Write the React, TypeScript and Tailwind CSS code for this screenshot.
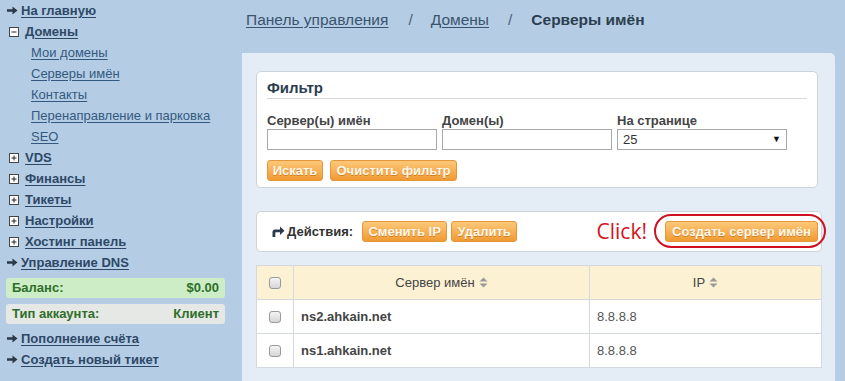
import type { ReactNode } from 'react';

const FONT = { fontFamily: '"Liberation Sans", Arial, sans-serif' };

function Arrow() {
  return (
    <svg width="11" height="9" viewBox="0 0 11 9" className="shrink-0">
      <path d="M0 3.2 H5.5 V0.5 L10.5 4.5 L5.5 8.5 V5.8 H0 Z" fill="#2b3a4a" />
    </svg>
  );
}

function ToggleBox({ open }: { open: boolean }) {
  return (
    <svg width="10" height="10" viewBox="0 0 10 10" className="shrink-0">
      <rect x="0.5" y="0.5" width="9" height="9" fill="#fff" stroke="#444" />
      <path d="M2.5 5 H7.5" stroke="#222" />
      {!open && <path d="M5 2.5 V7.5" stroke="#222" />}
    </svg>
  );
}

function SortIcon() {
  return (
    <svg width="9" height="11" viewBox="0 0 9 11" className="inline-block ml-[4px] -mt-[2px] align-middle">
      <path d="M0.5 4.5 L4.5 0.5 L8.5 4.5 Z" fill="#9a9a9a" />
      <path d="M0.5 6.5 L4.5 10.5 L8.5 6.5 Z" fill="#9a9a9a" />
    </svg>
  );
}

function Check() {
  return (
    <div className="w-[12px] h-[12px] rounded-[3px] border border-[#9a9a9a] bg-gradient-to-b from-[#f4f4f4] to-[#d6d6d6]" />
  );
}

function OrangeButton({ children, w }: { children: ReactNode; w: string }) {
  return (
    <button
      className={`${w} h-[21px] rounded-[3px] border border-[#e3973a] bg-gradient-to-b from-[#fcc877] to-[#f09a30] text-[13px] font-bold text-[#fff8e8] leading-[19px] [text-shadow:0_1px_0_rgba(180,100,20,0.6)] flex items-center justify-center`}
    >
      {children}
    </button>
  );
}

function NavTop({ label, icon }: { label: string; icon: ReactNode }) {
  return (
    <div className="h-[21px] flex items-center">
      {icon}
      <a className="text-[13px] font-bold text-[#2d4867] underline underline-offset-2">{label}</a>
    </div>
  );
}

function NavSub({ label }: { label: string }) {
  return (
    <div className="h-[21px] flex items-center pl-[24px]">
      <a className="text-[13px] text-[#34597f] underline underline-offset-2">{label}</a>
    </div>
  );
}

export default function App() {
  return (
    <div className="w-[845px] h-[381px] overflow-hidden bg-[#b5cde4] flex" style={FONT}>
      {/* sidebar */}
      <div className="w-[242px] shrink-0 pl-[7px] pr-[17px]">
        <NavTop label="На главную" icon={<span className="mr-[3px] flex"><Arrow /></span>} />
        <NavTop label="Домены" icon={<span className="ml-[2px] mr-[6px] flex"><ToggleBox open /></span>} />
        <NavSub label="Мои домены" />
        <NavSub label="Серверы имён" />
        <NavSub label="Контакты" />
        <NavSub label="Перенаправление и парковка" />
        <NavSub label="SEO" />
        {['VDS', 'Финансы', 'Тикеты', 'Настройки', 'Хостинг панель'].map((l) => (
          <NavTop key={l} label={l} icon={<span className="ml-[2px] mr-[6px] flex"><ToggleBox open={false} /></span>} />
        ))}
        <NavTop label="Управление DNS" icon={<span className="mr-[3px] flex"><Arrow /></span>} />
        <div className="mt-[5px] -ml-[1px] h-[20px] rounded-[3px] bg-[#cdedc6] flex items-center justify-between px-[6px] text-[13px] font-bold text-[#2f6e2a]">
          <span>Баланс:</span>
          <span>$0.00</span>
        </div>
        <div className="mt-[6px] -ml-[1px] h-[20px] rounded-[3px] bg-[#e6e8e6] flex items-center justify-between px-[6px] text-[13px] font-bold text-[#2f6e2a]">
          <span>Тип аккаунта:</span>
          <span>Клиент</span>
        </div>
        <div className="mt-[4px]">
          <NavTop label="Пополнение счёта" icon={<span className="mr-[3px] flex"><Arrow /></span>} />
          <NavTop label="Создать новый тикет" icon={<span className="mr-[3px] flex"><Arrow /></span>} />
        </div>
      </div>

      {/* main */}
      <div className="flex-1 flex flex-col pr-[10px]">
        <div className="h-[53px] shrink-0 pl-[4px] pt-[10px] text-[15.5px] leading-[20px] flex text-[#3a546f]">
          <a className="underline underline-offset-2">Панель управления</a>
          <span className="ml-[20px] mr-[18px] text-[#4a6078]">/</span>
          <a className="underline underline-offset-2">Домены</a>
          <span className="ml-[19px] mr-[19px] text-[#4a6078]">/</span>
          <span className="font-bold text-[#2c3e50]">Серверы имён</span>
        </div>

        <div className="flex-1 bg-[#e4ecf5] rounded-tr-[5px] pl-[14px] pr-[13px] pt-[18px]">
          {/* filter */}
          <div className="mr-[4px] bg-white border border-[#ccd3da] rounded-[5px] px-[10px] pb-[6px]">
            <div className="pt-[7px] pb-[2px] leading-[17px] text-[15px] font-bold text-[#2c3e50] border-b border-[#d6d9dc]">
              Фильтр
            </div>
            <div className="mt-[14px] flex gap-[5px]">
              {['Сервер(ы) имён', 'Домен(ы)', 'На странице'].map((l, i) => (
                <div key={l} className="w-[170px]">
                  <div className="text-[13px] font-bold text-[#444] leading-[16px]">{l}</div>
                  {i < 2 ? (
                    <div className="h-[21px] border border-[#a9a9a9] bg-white" />
                  ) : (
                    <div className="h-[21px] border border-[#a9a9a9] bg-white flex items-center justify-between px-[5px] text-[13px] text-[#333]">
                      <span>25</span>
                      <span className="text-[9px] text-[#111]">▼</span>
                    </div>
                  )}
                </div>
              ))}
            </div>
            <div className="mt-[10px] flex gap-[7px]">
              <OrangeButton w="w-[56px]">Искать</OrangeButton>
              <OrangeButton w="w-[127px]">Очистить фильтр</OrangeButton>
            </div>
          </div>

          {/* actions */}
          <div className="mt-[23px] h-[41px] bg-white border border-[#ccd3da] rounded-[5px] pl-[15px] pr-[3px] flex items-center">
            <svg width="13" height="11" viewBox="0 0 13 11" className="shrink-0">
              <path d="M0.5 11 V6 Q0.5 3.5 3 3.5 H8 V0.5 L12.5 4.8 L8 9 V6.2 H3.8 Q3.3 6.2 3.3 6.8 V11 Z" fill="#2b3a4a" />
            </svg>
            <span className="ml-[2px] text-[13px] font-bold text-[#333]">Действия:</span>
            <div className="ml-[9px] flex gap-[4px]">
              <OrangeButton w="w-[85px]">Сменить IP</OrangeButton>
              <OrangeButton w="w-[66px]">Удалить</OrangeButton>
            </div>
            <span
              className="ml-auto mr-[18px] text-[21px] text-[#d3141e] leading-none"
              style={{ fontFamily: '"Open Sans", sans-serif' }}
            >
              Click!
            </span>
            <div className="relative">
              <OrangeButton w="w-[153px]">Создать сервер имён</OrangeButton>
              <span className="absolute -left-[11px] -right-[8px] -top-[7px] -bottom-[6px] border-2 border-[#cf1020] rounded-[18px]" />
            </div>
          </div>

          {/* table */}
          <table className="mt-[13px] w-full border-collapse text-[13px] table-fixed">
            <colgroup>
              <col className="w-[37px]" />
              <col className="w-[296px]" />
              <col />
            </colgroup>
            <thead>
              <tr className="h-[34px] bg-[#fdf1d3]">
                <th className="border border-[#d3d9df] font-normal">
                  <div className="flex justify-center"><Check /></div>
                </th>
                <th className="border border-[#d3d9df] font-normal text-[#444]">
                  Сервер имён<SortIcon />
                </th>
                <th className="border border-[#d3d9df] font-normal text-[#444]">
                  IP<SortIcon />
                </th>
              </tr>
            </thead>
            <tbody>
              {['ns2.ahkain.net', 'ns1.ahkain.net'].map((n) => (
                <tr key={n} className="h-[34px] bg-white">
                  <td className="border border-[#d3d9df]">
                    <div className="flex justify-center"><Check /></div>
                  </td>
                  <td className="border border-[#d3d9df] pl-[7px] font-bold text-[#444]">{n}</td>
                  <td className="border border-[#d3d9df] pl-[7px] text-[#555]">8.8.8.8</td>
                </tr>
              ))}
            </tbody>
          </table>
        </div>
      </div>
    </div>
  );
}
